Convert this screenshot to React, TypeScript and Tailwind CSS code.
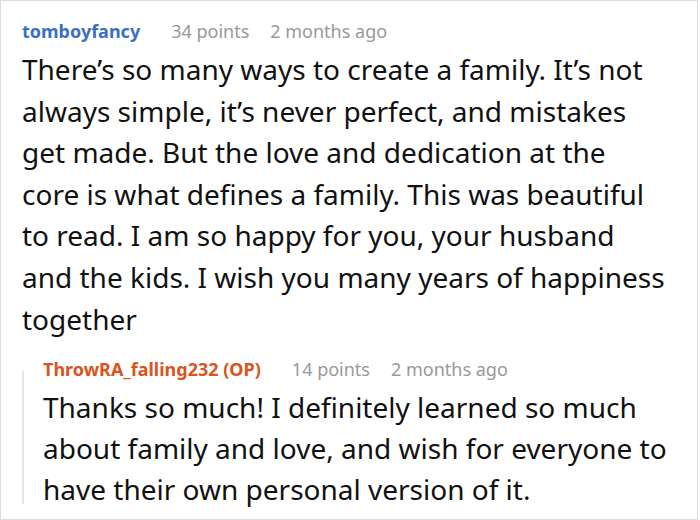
import React from 'react';

const font = { fontFamily: '"Noto Sans", "Open Sans", sans-serif' };

const Meta = ({ points, time }: { points: string; time: string }) => (
	<>
		<span className="ml-[31px] text-[#999]">{points}</span>
		<span className="ml-[21px] text-[#999]">{time}</span>
	</>
);

const Lines = ({ lines }: { lines: string[] }) => (
	<>
		{lines.map((line, i) => (
			<span key={i} className="block whitespace-nowrap">
				{line}
			</span>
		))}
	</>
);

export default function App() {
	return (
		<div
			className="box-border h-[520px] w-[698px] overflow-hidden border border-[#dcdcdc] bg-white pl-[21px] pr-1 pt-[17px] text-[#111]"
			style={font}
		>
			{/* Top comment */}
			<div className="flex items-baseline text-[18px] leading-[26px]">
				<span className="font-bold text-[#3a6fc4]">tomboyfancy</span>
				<Meta points="34 points" time="2 months ago" />
			</div>
			<p className="mt-[5px] text-[28px] leading-[41.6px]">
				<Lines
					lines={[
						'There’s so many ways to create a family. It’s not',
						'always simple, it’s never perfect, and mistakes',
						'get made. But the love and dedication at the',
						'core is what defines a family. This was beautiful',
						'to read. I am so happy for you, your husband',
						'and the kids. I wish you many years of happiness',
						'together',
					]}
				/>
			</p>

			{/* Reply */}
			<div className="mt-[16px] flex">
				<div className="mb-[6px] mt-[15px] w-[2px] shrink-0 bg-[#e4e4e4]" />
				<div className="pl-[19px]">
					<div className="flex items-baseline text-[18px] leading-[26px]">
						<span className="font-bold text-[#d9541e]">ThrowRA_falling232 (OP)</span>
						<Meta points="14 points" time="2 months ago" />
					</div>
					<p className="mt-[5px] text-[28px] leading-[41px]">
						<Lines
							lines={[
								'Thanks so much! I definitely learned so much',
								'about family and love, and wish for everyone to',
								'have their own personal version of it.',
							]}
						/>
					</p>
				</div>
			</div>
		</div>
	);
}
